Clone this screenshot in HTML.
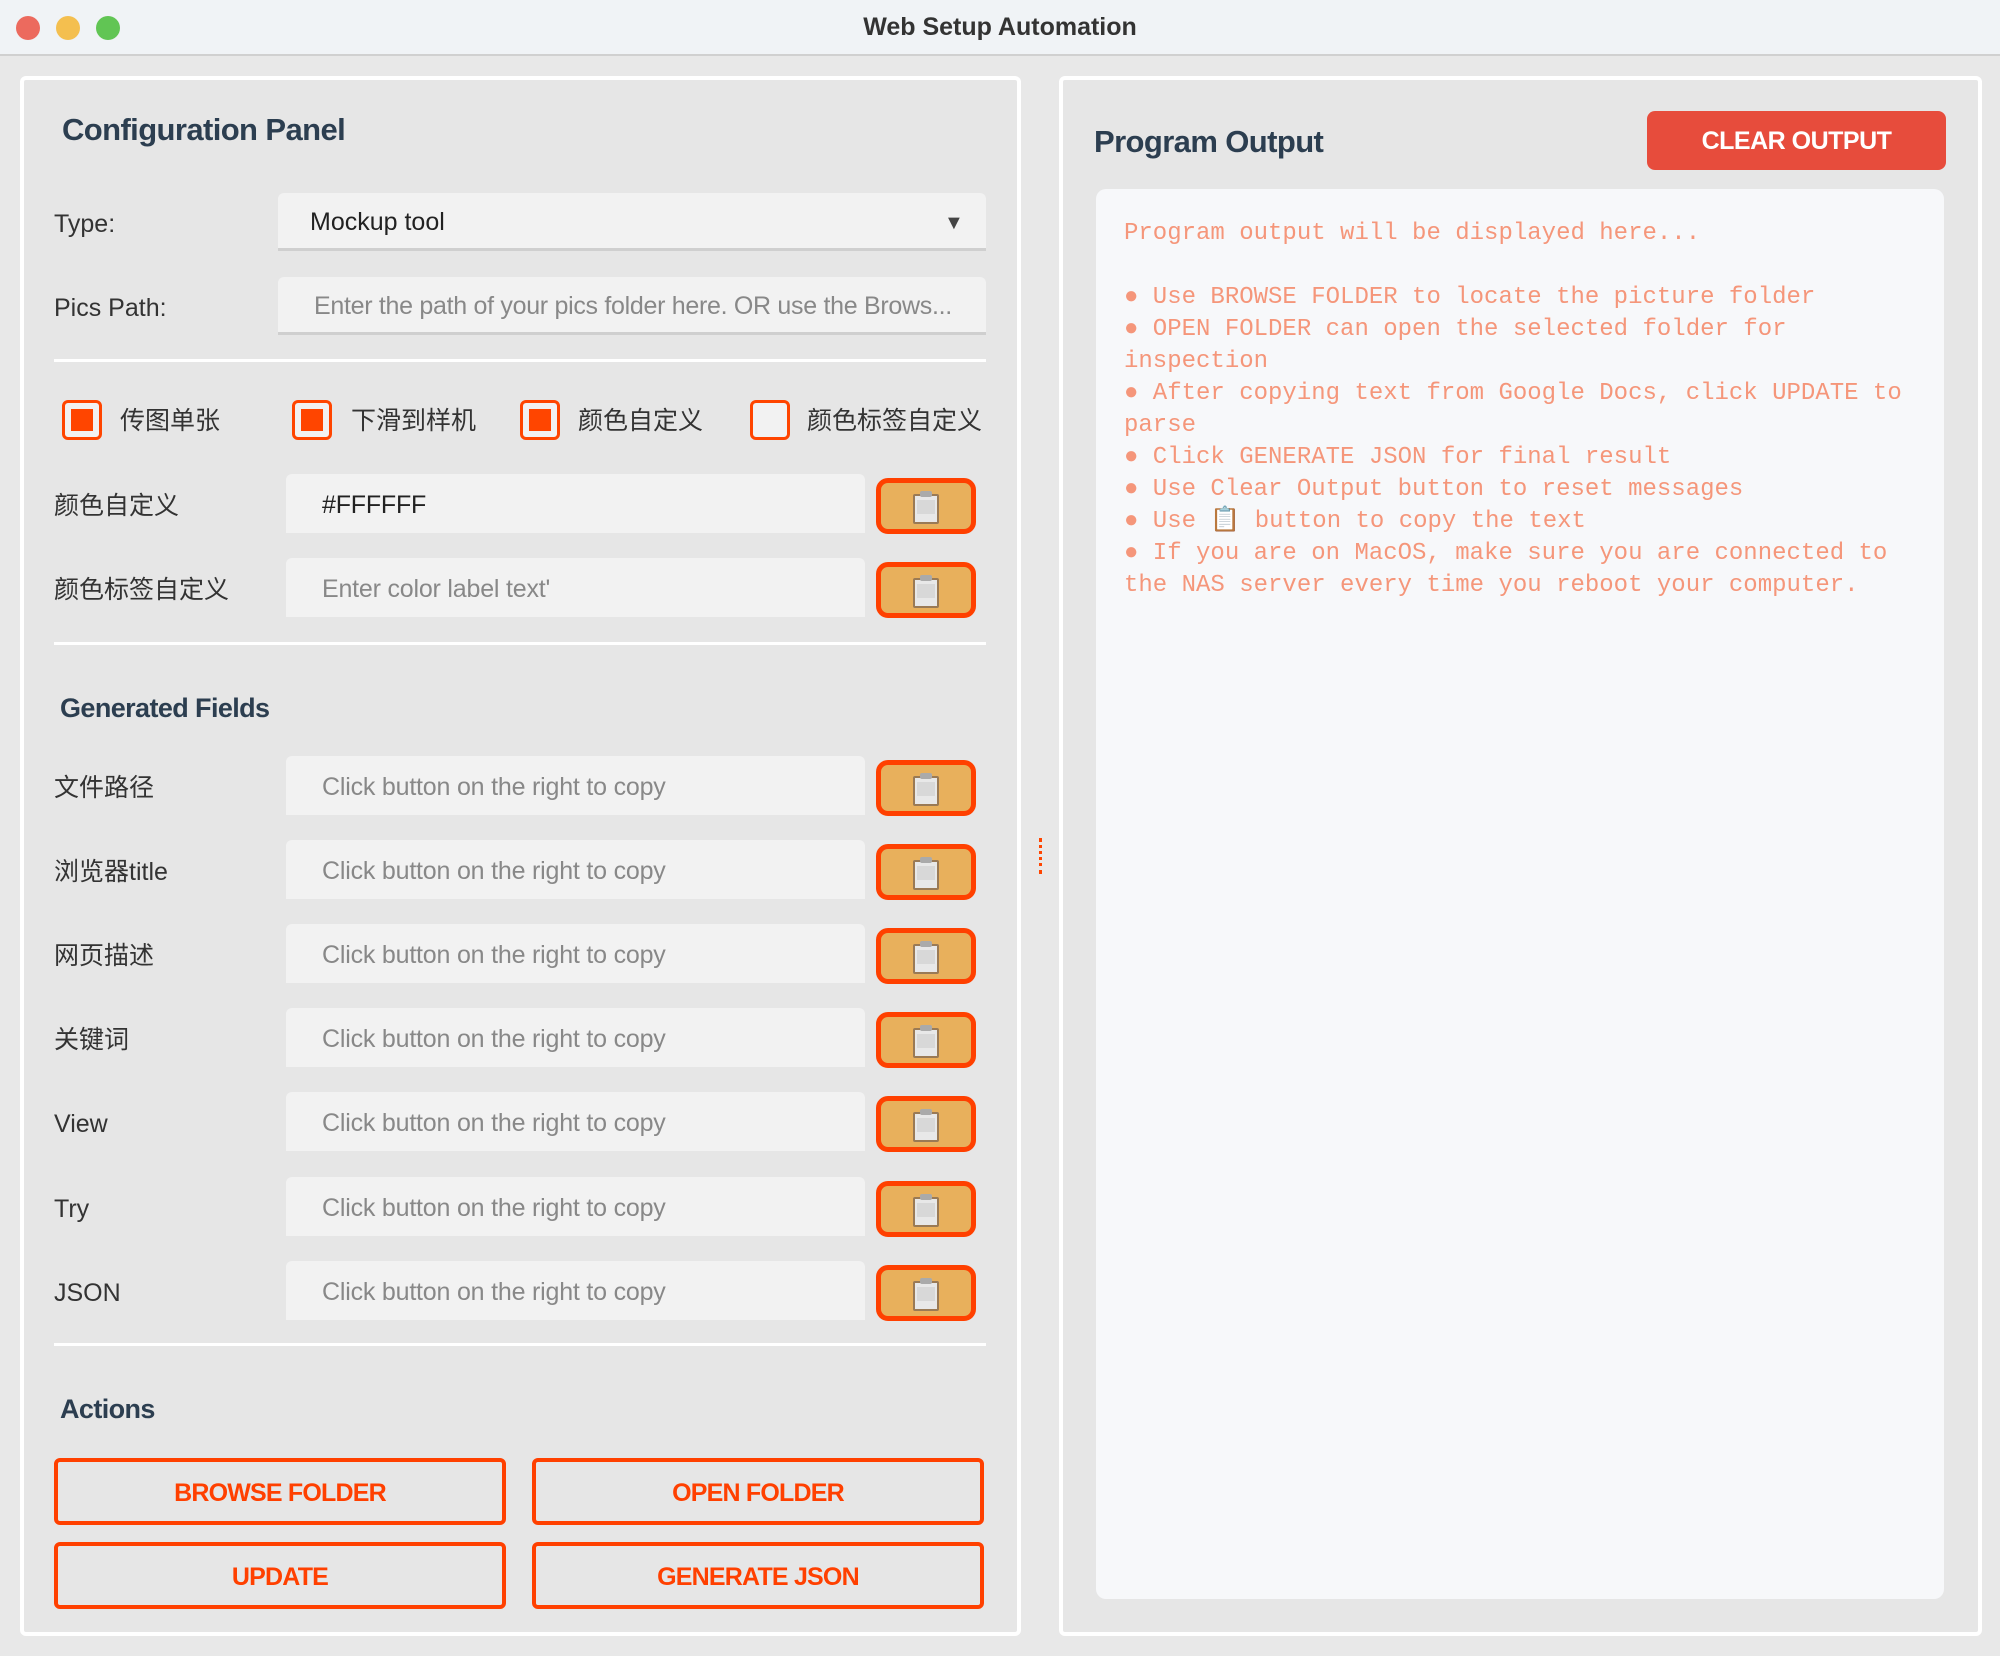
<!DOCTYPE html>
<html><head><meta charset="utf-8"><style>
*{margin:0;padding:0;box-sizing:border-box}
body{width:2000px;height:1656px;background:#e8e8e8;font-family:"Liberation Sans","Noto Sans CJK SC",sans-serif;position:relative;overflow:hidden;color:#333}
.a{position:absolute}
.tb{left:0;top:0;width:2000px;height:56px;background:#f0f3f6;border-bottom:2px solid #d0d0d0}
.dot{width:24px;height:24px;border-radius:50%;top:16px}
.panel{background:#e6e6e6;border:4px solid #fff;border-radius:6px}
.h{font-weight:bold;color:#2c3e50;letter-spacing:-0.6px}
.lbl{font-size:25px;color:#333;line-height:30px}
.inp{background:#f2f2f2;font-size:25px;line-height:62px;padding-left:36px;color:#888;border-radius:6px 6px 0 0;letter-spacing:-0.2px}
.inp2{background:#f2f2f2;font-size:25px;padding-left:36px;color:#888;border-bottom:3px solid #cfcfcf;border-radius:6px 6px 0 0}
.cb{width:40px;height:40px;border:3px solid #ff4500;border-radius:6px;background:#f2f2f2}
.cb i{position:absolute;left:6px;top:6px;width:22px;height:22px;background:#ff4500}
.btn{width:100px;height:56px;background:#e8b05c;border:5px solid #ff4000;border-radius:12px}
.btn svg{position:absolute;left:31px;top:7px}
.sep{height:3px;background:#fff;left:54px;width:932px}
.ab{border:4px solid #ff4000;border-radius:6px;font-weight:bold;font-size:25px;color:#ff4000;text-align:center;line-height:62px;width:452px;height:67px;letter-spacing:-0.8px}
.out{font-family:"Liberation Mono",monospace;font-size:24px;line-height:32px;color:#f5967a;white-space:pre}
</style></head><body>
<div class="a tb"></div>
<div class="a dot" style="left:16px;background:#ec6a5e"></div>
<div class="a dot" style="left:56px;background:#f4bf4f"></div>
<div class="a dot" style="left:96px;background:#61c554"></div>
<div class="a" style="left:0;width:2000px;top:13px;text-align:center;font-size:25px;font-weight:bold;color:#333">Web Setup Automation</div>

<div class="a panel" style="left:20px;top:76px;width:1001px;height:1560px"></div>
<div class="a panel" style="left:1059px;top:76px;width:923px;height:1560px"></div>

<div class="a h" style="left:62px;top:112px;font-size:31px">Configuration Panel</div>
<div class="a lbl" style="left:54px;top:209px">Type:</div>
<div class="a inp2" style="left:278px;top:193px;width:708px;height:58px;line-height:58px;color:#222;padding-left:32px">Mockup tool</div>
<div class="a" style="left:944px;top:212px;font-size:20px;color:#444">▼</div>
<div class="a lbl" style="left:54px;top:293px">Pics Path:</div>
<div class="a inp2" style="left:278px;top:277px;width:708px;height:58px;line-height:58px;padding-left:36px;white-space:nowrap;overflow:hidden;letter-spacing:-0.3px">Enter the path of your pics folder here. OR use the Brows...</div>
<div class="a sep" style="top:359px"></div>

<div class="a cb" style="left:62px;top:400px"><i></i></div><div class="a lbl" style="left:120px;top:406px">传图单张</div>
<div class="a cb" style="left:292px;top:400px"><i></i></div><div class="a lbl" style="left:351px;top:406px">下滑到样机</div>
<div class="a cb" style="left:520px;top:400px"><i></i></div><div class="a lbl" style="left:578px;top:406px">颜色自定义</div>
<div class="a cb" style="left:750px;top:400px"></div><div class="a lbl" style="left:807px;top:406px">颜色标签自定义</div>

<div class="a lbl" style="left:54px;top:491px">颜色自定义</div>
<div class="a inp" style="left:286px;top:474px;width:579px;height:59px;color:#222">#FFFFFF</div>
<div class="a lbl" style="left:54px;top:575px">颜色标签自定义</div>
<div class="a inp" style="left:286px;top:558px;width:579px;height:59px">Enter color label text'</div>
<div class="a sep" style="top:642px"></div>
<div class="a h" style="left:60px;top:693px;font-size:27px">Generated Fields</div>

<div class="a lbl" style="left:54px;top:773px">文件路径</div>
<div class="a lbl" style="left:54px;top:857px">浏览器title</div>
<div class="a lbl" style="left:54px;top:941px">网页描述</div>
<div class="a lbl" style="left:54px;top:1025px">关键词</div>
<div class="a lbl" style="left:54px;top:1109px">View</div>
<div class="a lbl" style="left:54px;top:1194px">Try</div>
<div class="a lbl" style="left:54px;top:1278px">JSON</div>

<div class="a inp" style="left:286px;top:756px;width:579px;height:59px">Click button on the right to copy</div>
<div class="a inp" style="left:286px;top:840px;width:579px;height:59px">Click button on the right to copy</div>
<div class="a inp" style="left:286px;top:924px;width:579px;height:59px">Click button on the right to copy</div>
<div class="a inp" style="left:286px;top:1008px;width:579px;height:59px">Click button on the right to copy</div>
<div class="a inp" style="left:286px;top:1092px;width:579px;height:59px">Click button on the right to copy</div>
<div class="a inp" style="left:286px;top:1177px;width:579px;height:59px">Click button on the right to copy</div>
<div class="a inp" style="left:286px;top:1261px;width:579px;height:59px">Click button on the right to copy</div>

<div class="a sep" style="top:1343px"></div>
<div class="a h" style="left:60px;top:1394px;font-size:27px">Actions</div>
<div class="a ab" style="left:54px;top:1458px">BROWSE FOLDER</div>
<div class="a ab" style="left:532px;top:1458px">OPEN FOLDER</div>
<div class="a ab" style="left:54px;top:1542px">UPDATE</div>
<div class="a ab" style="left:532px;top:1542px">GENERATE JSON</div>

<div class="a" style="left:1039px;top:838px;width:4px;height:36px;border-left:3px dotted #ff4500"></div>

<div class="a h" style="left:1094px;top:124px;font-size:31px">Program Output</div>
<div class="a" style="left:1647px;top:111px;width:299px;height:59px;background:#e74c3c;border-radius:8px;color:#fff;font-weight:bold;font-size:25px;text-align:center;line-height:61px;letter-spacing:-0.5px">CLEAR OUTPUT</div>
<div class="a" style="left:1096px;top:189px;width:848px;height:1410px;background:#f7f8fa;border-radius:10px"></div>
<div class="a out" style="left:1124px;top:218px">Program output will be displayed here...

● Use BROWSE FOLDER to locate the picture folder
● OPEN FOLDER can open the selected folder for
inspection
● After copying text from Google Docs, click UPDATE to
parse
● Click GENERATE JSON for final result
● Use Clear Output button to reset messages
● Use 📋 button to copy the text
● If you are on MacOS, make sure you are connected to
the NAS server every time you reboot your computer.</div>

<svg width="0" height="0" style="position:absolute"><defs><g id="clip"><rect x="1" y="4" width="26" height="30" rx="2" fill="#9a7a55"/><rect x="3" y="6" width="22" height="26" fill="#e8e8e8"/><rect x="8" y="1" width="12" height="6" rx="2" fill="#aaa"/><rect x="5" y="10" width="18" height="14" fill="#d8d8d8"/></g></defs></svg>
<div class="a btn" style="left:876px;top:478px"><svg width="28" height="36"><use href="#clip"/></svg></div>
<div class="a btn" style="left:876px;top:562px"><svg width="28" height="36"><use href="#clip"/></svg></div>
<div class="a btn" style="left:876px;top:760px"><svg width="28" height="36"><use href="#clip"/></svg></div>
<div class="a btn" style="left:876px;top:844px"><svg width="28" height="36"><use href="#clip"/></svg></div>
<div class="a btn" style="left:876px;top:928px"><svg width="28" height="36"><use href="#clip"/></svg></div>
<div class="a btn" style="left:876px;top:1012px"><svg width="28" height="36"><use href="#clip"/></svg></div>
<div class="a btn" style="left:876px;top:1096px"><svg width="28" height="36"><use href="#clip"/></svg></div>
<div class="a btn" style="left:876px;top:1181px"><svg width="28" height="36"><use href="#clip"/></svg></div>
<div class="a btn" style="left:876px;top:1265px"><svg width="28" height="36"><use href="#clip"/></svg></div>
</body></html>
